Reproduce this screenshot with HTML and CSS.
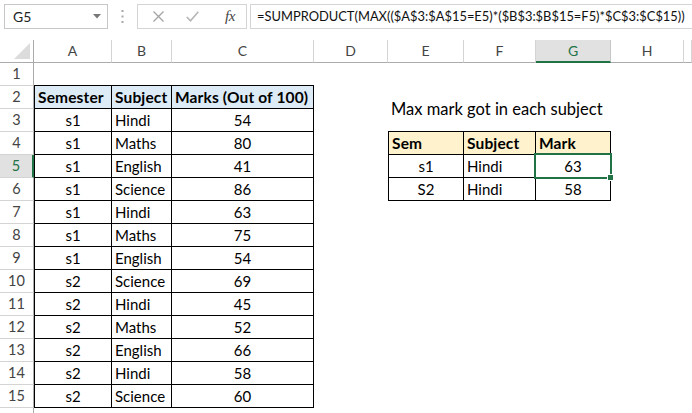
FILE: index.html
```html
<!DOCTYPE html>
<html>
<head>
<meta charset="utf-8">
<link rel="stylesheet" href="styles.css">
</head>
<body>
<div class="topbar">
  <div class="namebox"><span>G5</span><svg width="8" height="5" viewBox="0 0 8 5"><path d="M0 0H8L4 4.5Z" fill="#777"/></svg></div>
  <div class="dots"><svg width="3" height="13" viewBox="0 0 3 13"><rect x="0.5" y="0" width="2" height="2" fill="#a8a8a8"/><rect x="0.5" y="5.5" width="2" height="2" fill="#a8a8a8"/><rect x="0.5" y="11" width="2" height="2" fill="#a8a8a8"/></svg></div>
  <div class="fxbox">
    <svg class="ic" width="11" height="11" viewBox="0 0 11 11"><path d="M0.5 0.5L10.5 10.5M10.5 0.5L0.5 10.5" stroke="#a3a3a3" stroke-width="1.3" fill="none"/></svg>
    <svg class="ic" width="13" height="11" viewBox="0 0 13 11"><path d="M0.8 6L4.5 9.8L12.3 0.8" stroke="#b5b5b5" stroke-width="1.6" fill="none"/></svg>
    <span class="fx">fx</span>
  </div>
  <div class="formula">=SUMPRODUCT(MAX(($A$3:$A$15=E5)*($B$3:$B$15=F5)*$C$3:$C$15))</div>
</div>
<div class="sheet">
  <div class="r hdr"><div class="corner"><svg width="16" height="16" viewBox="0 0 16 16"><path d="M16 0V16H0Z" fill="#dcdcdc"/></svg></div><div>A</div><div>B</div><div>C</div><div>D</div><div>E</div><div>F</div><div class="hsel">G</div><div>H</div><div></div></div>
  <div class="r"><div class="rh">1</div><div class="c tb"></div><div class="c tb"></div><div class="c tb"></div><div class="c"></div><div class="c"></div><div class="c"></div><div class="c"></div><div class="c"></div><div class="c"></div></div>
  <div class="r"><div class="rh">2</div><div class="c t tl blue b">Semester</div><div class="c t blue b">Subject</div><div class="c t blue b">Marks (Out of 100)</div><div class="c"></div><div class="c title">Max mark got in each subject</div><div class="c"></div><div class="c"></div><div class="c"></div><div class="c"></div></div>
  <div class="r"><div class="rh">3</div><div class="c t tl ctr">s1</div><div class="c t">Hindi</div><div class="c t ctr">54</div><div class="c"></div><div class="c tb"></div><div class="c tb"></div><div class="c tb"></div><div class="c"></div><div class="c"></div></div>
  <div class="r"><div class="rh">4</div><div class="c t tl ctr">s1</div><div class="c t">Maths</div><div class="c t ctr">80</div><div class="c"></div><div class="c t tl yel b">Sem</div><div class="c t yel b">Subject</div><div class="c t yel b">Mark</div><div class="c"></div><div class="c"></div></div>
  <div class="r"><div class="rh rsel">5</div><div class="c t tl ctr">s1</div><div class="c t">English</div><div class="c t ctr">41</div><div class="c"></div><div class="c t tl ctr">s1</div><div class="c t">Hindi</div><div class="c t ctr sel">63</div><div class="c"></div><div class="c"></div></div>
  <div class="r"><div class="rh">6</div><div class="c t tl ctr">s1</div><div class="c t">Science</div><div class="c t ctr">86</div><div class="c"></div><div class="c t tl ctr">S2</div><div class="c t">Hindi</div><div class="c t ctr">58</div><div class="c"></div><div class="c"></div></div>
  <div class="r"><div class="rh">7</div><div class="c t tl ctr">s1</div><div class="c t">Hindi</div><div class="c t ctr">63</div></div>
  <div class="r"><div class="rh">8</div><div class="c t tl ctr">s1</div><div class="c t">Maths</div><div class="c t ctr">75</div></div>
  <div class="r"><div class="rh">9</div><div class="c t tl ctr">s1</div><div class="c t">English</div><div class="c t ctr">54</div></div>
  <div class="r"><div class="rh">10</div><div class="c t tl ctr">s2</div><div class="c t">Science</div><div class="c t ctr">69</div></div>
  <div class="r"><div class="rh">11</div><div class="c t tl ctr">s2</div><div class="c t">Hindi</div><div class="c t ctr">45</div></div>
  <div class="r"><div class="rh">12</div><div class="c t tl ctr">s2</div><div class="c t">Maths</div><div class="c t ctr">52</div></div>
  <div class="r"><div class="rh">13</div><div class="c t tl ctr">s2</div><div class="c t">English</div><div class="c t ctr">66</div></div>
  <div class="r"><div class="rh">14</div><div class="c t tl ctr">s2</div><div class="c t">Hindi</div><div class="c t ctr">58</div></div>
  <div class="r"><div class="rh">15</div><div class="c t tl ctr">s2</div><div class="c t">Science</div><div class="c t ctr">60</div></div>
  <div class="r"><div class="rh"></div></div>
</div>
</body>
</html>
```
FILE: styles.css
```css
html, body {
  margin: 0;
  padding: 0;
  background: #fff;
}
body {
  width: 692px;
  height: 413px;
  overflow: hidden;
  font-family: Lato, "Liberation Sans", sans-serif;
  font-size: 15px;
  color: #000;
}
.topbar {
  height: 40px;
  box-sizing: border-box;
  padding-top: 4px;
  display: flex;
  align-items: flex-start;
}
.namebox {
  margin-left: 4px;
  width: 104px;
  height: 25px;
  box-sizing: border-box;
  border: 1px solid #c6c6c6;
  display: flex;
  align-items: center;
  justify-content: space-between;
  padding: 0 6px 0 8px;
  color: #222;
  font-size: 14px;
}
.dots {
  width: 29px;
  height: 25px;
  display: flex;
  align-items: center;
  justify-content: center;
}
.fxbox {
  width: 110px;
  height: 25px;
  box-sizing: border-box;
  border: 1px solid #d4d4d4;
  display: flex;
  align-items: center;
  padding-left: 15px;
}
.fxbox .ic:first-child { margin-right: 22px; }
.fxbox .ic:nth-child(2) { margin-right: 26px; }
.fx {
  font-family: "Liberation Serif", serif;
  font-style: italic;
  font-size: 15px;
  color: #444;
  letter-spacing: -0.5px;
}
.formula {
  margin-left: 3px;
  flex: 1;
  height: 25px;
  box-sizing: border-box;
  border: 1px solid #d4d4d4;
  border-right: none;
  padding-left: 6px;
  line-height: 23px;
  font-size: 12.9px;
  white-space: nowrap;
  overflow: hidden;
  color: #111;
}
.sheet {
  display: flex;
  flex-direction: column;
}
.r {
  display: grid;
  grid-template-columns: 34px 78px 60px 142px 74px 76px 72px 75px 73px 1fr;
  grid-template-rows: 23px;
  height: 23px;
}
.hdr > div {
  box-sizing: border-box;
  border-right: 1px solid #d4d4d4;
  border-bottom: 1px solid #ababab;
  color: #444;
  text-align: center;
  line-height: 22px;
  font-size: 14px;
}
.hdr > .corner {
  border-right: 1px solid #ababab;
  display: flex;
  align-items: flex-end;
  justify-content: flex-end;
  padding: 0 3px 3px 0;
}
.hdr > .hsel {
  background: #e1e1e1;
  color: #217346;
  border-bottom: 2px solid #217346;
  border-right-color: #c6c6c6;
}
.rh {
  box-sizing: border-box;
  border-right: 1px solid #ababab;
  border-bottom: 1px solid #d4d4d4;
  color: #444;
  text-align: center;
  line-height: 22px;
  font-size: 14.5px;
}
.rh.rsel {
  background: #e1e1e1;
  color: #217346;
  border-right: 2px solid #217346;
}
.c {
  box-sizing: border-box;
  display: flex;
  align-items: center;
  padding: 0 3px;
  white-space: nowrap;
  min-width: 0;
  height: 23px;
}
.t {
  border-right: 1px solid #000;
  border-bottom: 1px solid #000;
}
.tl { border-left: 1px solid #000; }
.tb { border-bottom: 1px solid #000; }
.ctr { justify-content: center; }
.b { font-weight: 700; font-size: 15.5px; letter-spacing: 0.15px; }
.blue { background: #ddebf7; }
.yel { background: #fff2cc; }
.title {
  overflow: visible;
  align-items: flex-start;
  padding-top: 13px;
  font-size: 16.5px;
  line-height: 20px;
}
.sel { position: relative; }
.sel::after {
  content: "";
  position: absolute;
  left: -2px;
  top: -2px;
  right: -2px;
  bottom: -2px;
  border: 2px solid #217346;
}
.sel::before {
  content: "";
  position: absolute;
  right: -4px;
  bottom: -4px;
  width: 5px;
  height: 5px;
  background: #217346;
  border: 1px solid #fff;
  z-index: 1;
}
```
